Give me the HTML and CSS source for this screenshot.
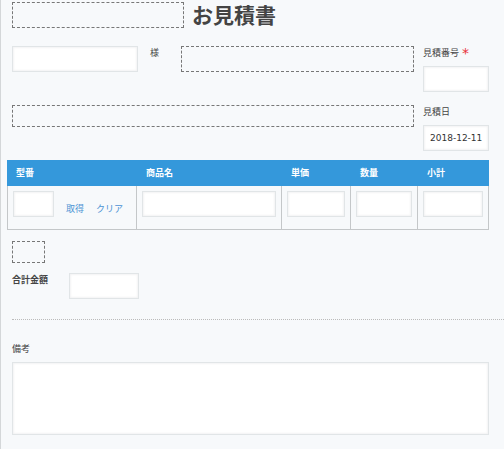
FILE: index.html
```html
<!DOCTYPE html>
<html lang="ja">
<head>
    <meta charset="UTF-8">
    <meta name="viewport" content="width=device-width, initial-scale=1.0">
    <title>お見積書</title>
    <link rel="stylesheet" href="styles.css">
</head>
<body>
    <form class="container">
        <div class="title-row">
            <div class="space space-logo"></div>
            <h1>お見積書</h1>
        </div>

        <div class="info">
            <div class="customer-row">
                <input type="text" id="customer" class="customer">
                <label for="customer" class="suffix">様</label>
                <div class="space space-grow"></div>
            </div>
            <div class="form-group">
                <label for="number">見積番号 <span class="required">*</span></label>
                <input type="text" id="number" required>
            </div>
            <div class="space space-line"></div>
            <div class="form-group">
                <label for="date">見積日</label>
                <input type="text" id="date" value="2018-12-11">
            </div>
        </div>

        <table class="items">
            <thead>
                <tr>
                    <th class="col-code">型番</th>
                    <th class="col-name">商品名</th>
                    <th class="col-price">単価</th>
                    <th class="col-count">数量</th>
                    <th class="col-subtotal">小計</th>
                </tr>
            </thead>
            <tbody>
                <tr>
                    <td>
                        <div class="lookup">
                            <input type="text" aria-label="型番">
                            <a href="#">取得</a>
                            <a href="#">クリア</a>
                        </div>
                    </td>
                    <td><input type="text" aria-label="商品名"></td>
                    <td><input type="text" aria-label="単価"></td>
                    <td><input type="text" aria-label="数量"></td>
                    <td><input type="text" aria-label="小計"></td>
                </tr>
            </tbody>
        </table>

        <div class="space space-small"></div>
        <div class="total-row">
            <label for="total">合計金額</label>
            <input type="text" id="total">
        </div>

        <hr>

        <div class="form-group">
            <label for="notes">備考</label>
            <textarea id="notes"></textarea>
        </div>
    </form>
</body>
</html>
```
FILE: styles.css
```css
* {
    box-sizing: border-box;
}
body {
    font-family: "DejaVu Sans", "Noto Sans CJK JP", sans-serif;
    font-size: 9px;
    line-height: 14px;
    color: #444;
    background-color: #f7f9fb;
    margin: 0;
}
.container {
    min-height: 100vh;
    padding: 2px 15px 14px 11px;
    border-left: 1px solid #d4d7d9;
}
input, textarea {
    display: block;
    width: 100%;
    margin: 0;
    border: 1px solid #e1e5e7;
    border-radius: 0;
    background-color: #fff;
    box-shadow: 0 0 2px 1px #f3f3f4 inset;
    color: #333;
    font: inherit;
}
input {
    height: 26px;
    padding: 0 6px;
}
textarea {
    height: 73px;
    padding: 6px;
    resize: none;
}
a {
    color: #4b92d4;
    text-decoration: none;
}

/* Blank spacer fields */
.space {
    height: 26px;
    border: 1px dashed #777;
}
.space-logo {
    width: 172px;
}
.space-grow {
    flex: 1;
}
.space-line {
    height: 22px;
}
.space-small {
    width: 33px;
    height: 22px;
}

.title-row {
    display: flex;
    align-items: flex-start;
    gap: 8px;
    margin-bottom: 16px;
}
h1 {
    margin: 0;
    font-size: 21px;
    line-height: 28px;
    color: #444;
}
.info {
    display: grid;
    grid-template-columns: 1fr 66px;
    gap: 13px 9px;
}
.customer-row {
    display: flex;
    align-items: flex-start;
}
.customer {
    width: 126px;
}
.suffix {
    width: 43px;
    padding-left: 12px;
}
.form-group {
    display: flex;
    flex-direction: column;
    gap: 6px;
}
.required {
    color: #e8313a;
    font-size: 14px;
    line-height: 1;
    vertical-align: top;
}

.items {
    width: calc(100% + 5px);
    margin: 9px 0 11px -5px;
    border-spacing: 0;
    table-layout: fixed;
}
.items th {
    height: 26px;
    padding: 0 9px;
    background-color: #3498db;
    color: #fff;
    font-weight: bold;
    text-align: left;
}
.items td {
    padding: 5px 5px 12px;
    border: solid #c4c7c9;
    border-width: 0 1px 1px 0;
    vertical-align: top;
}
.items td:first-child {
    border-left-width: 1px;
}
.col-code {
    width: 130px;
}
.col-price {
    width: 69px;
}
.col-count {
    width: 67px;
}
.col-subtotal {
    width: 71px;
}
.lookup {
    display: flex;
    align-items: flex-end;
    gap: 12px;
}
.lookup input {
    width: 41px;
}
.lookup a {
    line-height: 16px;
}

.total-row {
    display: flex;
    align-items: flex-start;
    margin-top: 10px;
}
.total-row label {
    width: 57px;
    font-weight: bold;
}
.total-row input {
    width: 70px;
}
hr {
    margin: 20px -15px 22px 0;
    border: 0;
    border-top: 1px dotted #bbb;
}
```
